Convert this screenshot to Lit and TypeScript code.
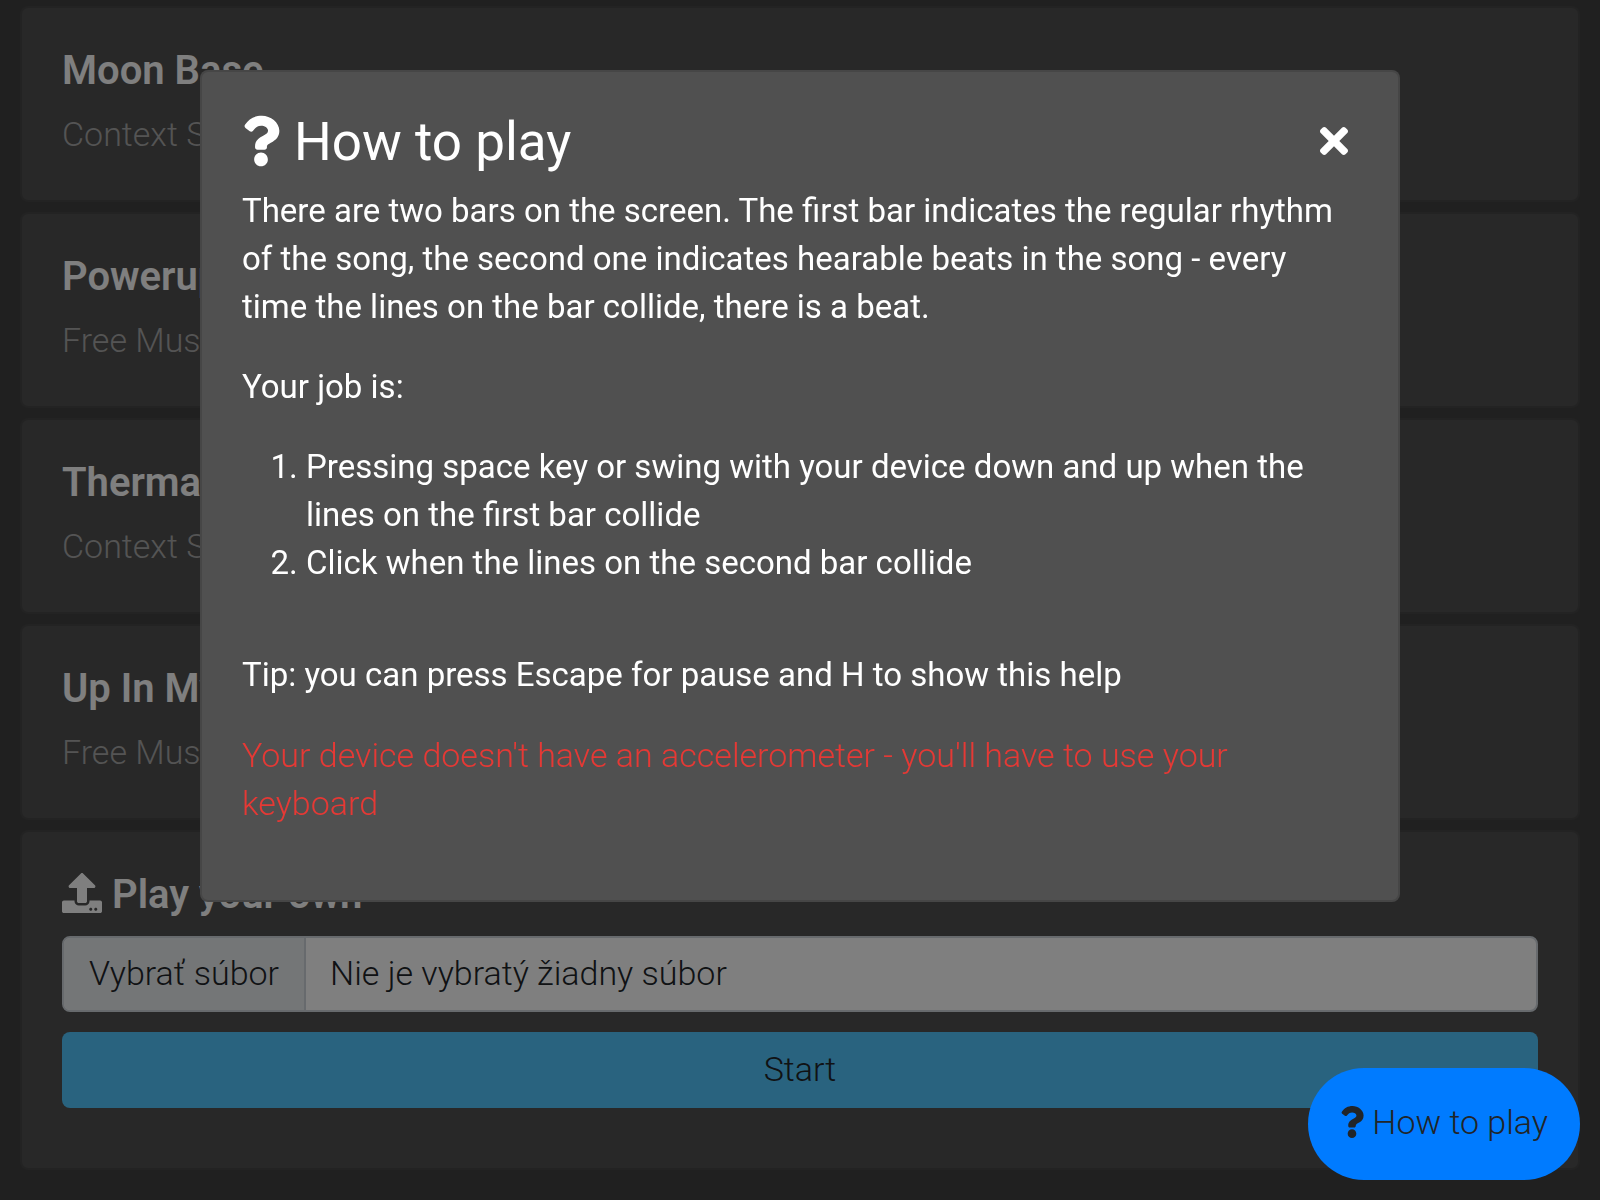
import { LitElement, html, css, svg, nothing } from "lit";
import { customElement, property, state } from "lit/decorators.js";

const ICONS: Record<string, { box: string; path: string }> = {
  question: {
    box: "0 0 384 512",
    path: "M202.021 0C122.202 0 70.503 32.703 29.914 91.026c-7.363 10.58-5.093 25.086 5.178 32.874l43.138 32.709c10.373 7.865 25.132 6.026 33.253-4.148 25.049-31.381 43.63-49.449 82.757-49.449 30.764 0 68.816 19.799 68.816 49.631 0 22.552-18.617 34.134-48.993 51.164-35.423 19.86-82.299 44.576-82.299 106.405V320c0 13.255 10.745 24 24 24h72.471c13.255 0 24-10.745 24-24v-5.773c0-42.86 125.268-44.645 125.268-160.627C377.504 66.256 286.902 0 202.021 0zM192 373.459c-38.196 0-69.271 31.075-69.271 69.271 0 38.195 31.075 69.27 69.271 69.27s69.271-31.075 69.271-69.271-31.075-69.27-69.271-69.27z",
  },
  close: {
    box: "0 80 352 352",
    path: "M242.72 256l100.07-100.07c12.28-12.28 12.28-32.19 0-44.48l-22.24-22.24c-12.28-12.28-32.19-12.28-44.48 0L176 189.28 75.93 89.21c-12.28-12.28-32.19-12.28-44.48 0L9.21 111.45c-12.28 12.28-12.28 32.19 0 44.48L109.28 256 9.21 356.07c-12.28 12.28-12.28 32.19 0 44.48l22.24 22.24c12.28 12.28 32.2 12.28 44.48 0L176 322.72l100.07 100.07c12.28 12.28 32.2 12.28 44.48 0l22.24-22.24c12.28-12.28 12.28-32.19 0-44.48L242.72 256z",
  },
  upload: {
    box: "0 0 512 512",
    path: "M296 384h-80c-13.3 0-24-10.7-24-24V192h-87.7c-17.8 0-26.7-21.5-14.1-34.1L242.3 5.7c7.5-7.5 19.8-7.5 27.3 0l152.2 152.2c12.6 12.6 3.7 34.1-14.1 34.1H320v168c0 13.3-10.7 24-24 24zm216-8v112c0 13.3-10.7 24-24 24H24c-13.3 0-24-10.7-24-24V376c0-13.3 10.7-24 24-24h136v8c0 30.9 25.1 56 56 56h80c30.9 0 56-25.1 56-56v-8h136c13.3 0 24 10.7 24 24zm-124 88c0-11-9-20-20-20s-20 9-20 20 9 20 20 20 20-9 20-20zm64 0c0-11-9-20-20-20s-20 9-20 20 9 20 20 20 20-9 20-20z",
  },
};

const icon = (name: string, cls: string) => html`
  <svg class=${cls} viewBox=${ICONS[name].box} aria-hidden="true">${svg`<path fill="currentColor" d=${ICONS[name].path}></path>`}</svg>
`;

const cardStyles = css`
  :host {
    display: block;
  }
  * {
    box-sizing: border-box;
  }
  .card {
    padding: 40px;
    border: 2px solid rgba(0, 0, 0, 0.125);
    border-radius: 8px;
    background: #505050;
  }
  .title {
    display: flex;
    align-items: center;
    gap: 10px;
    margin: 0 0 16px;
    color: #fff;
    font-size: 40px;
    font-weight: 600;
    line-height: 46px;
  }
`;

@customElement("song-card")
class SongCard extends LitElement {
  @property() name = "";
  @property() artist = "";

  static styles = [
    cardStyles,
    css`
      .artist {
        margin: 0 0 2px;
        color: #a8a8a8;
        font-size: 34px;
        line-height: 48px;
      }
    `,
  ];

  render() {
    return html`
      <article class="card">
        <h2 class="title">${this.name}</h2>
        <p class="artist">${this.artist}</p>
      </article>
    `;
  }
}

@customElement("upload-card")
class UploadCard extends LitElement {
  @state() private fileName = "";

  static styles = [
    cardStyles,
    css`
      .upload-icon {
        width: 40px;
        height: 40px;
        margin-bottom: 4px;
      }
      .title {
        margin-bottom: 18px;
      }
      .file {
        position: relative;
        display: flex;
        height: 76px;
        overflow: hidden;
        border: 2px solid #ced4da;
        border-radius: 8px;
        background: #fff;
        color: #212529;
        font-size: 34px;
        line-height: 70px;
        cursor: pointer;
      }
      .file-input {
        position: absolute;
        inset: 0;
        width: 100%;
        height: 100%;
        margin: 0;
        opacity: 0;
        cursor: pointer;
      }
      .file-button {
        padding: 0 25px;
        border-right: 2px solid #ced4da;
        background: #e9ecef;
        white-space: nowrap;
      }
      .file-name {
        flex: 1;
        padding: 0 24px;
      }
      .start {
        display: block;
        width: 100%;
        height: 76px;
        margin: 20px 0;
        padding: 0 0 2px;
        border: 0;
        border-radius: 8px;
        background: #52c6fe;
        color: #212529;
        font: inherit;
        font-size: 34px;
        cursor: pointer;
      }
    `,
  ];

  private pick(e: Event) {
    this.fileName = (e.target as HTMLInputElement).files?.[0]?.name ?? "";
  }

  render() {
    return html`
      <article class="card">
        <h2 class="title">${icon("upload", "upload-icon")}<span>Play your own</span></h2>
        <label class="file">
          <span class="file-button">Vybrať súbor</span>
          <span class="file-name">${this.fileName || "Nie je vybratý žiadny súbor"}</span>
          <input class="file-input" type="file" accept="audio/*" @change=${this.pick} />
        </label>
        <button class="start" type="button">Start</button>
      </article>
    `;
  }
}

@customElement("help-dialog")
class HelpDialog extends LitElement {
  static styles = css`
    * {
      box-sizing: border-box;
    }
    .backdrop {
      position: fixed;
      inset: 0;
      padding: 70px 12.5% 0;
      background: rgba(0, 0, 0, 0.5);
    }
    .dialog {
      padding: 40px;
      border: 2px solid rgba(0, 0, 0, 0.125);
      border-radius: 8px;
      background: #505050;
      color: #fff;
      font-size: 33px;
      font-weight: 400;
      line-height: 48px;
    }
    .head {
      display: flex;
      align-items: center;
      justify-content: space-between;
      margin-bottom: 14px;
    }
    .heading {
      display: flex;
      align-items: center;
      gap: 14px;
      margin: 0;
      font-size: 53px;
      font-weight: 400;
      line-height: 61px;
    }
    .heading-icon {
      width: 38px;
      height: 52px;
      margin-bottom: 4px;
    }
    .close {
      display: flex;
      padding: 8px 10px 12px;
      border: 0;
      background: none;
      color: inherit;
      cursor: pointer;
    }
    .close-icon {
      width: 28px;
      height: 28px;
    }
    .text {
      margin: 0 0 32px;
    }
    .steps {
      margin: 0 0 64px;
      padding-left: 64px;
    }
    .warning {
      margin: 0 0 33px;
      color: #e53935;
      font-size: 34px;
      font-weight: 300;
    }
  `;

  private close() {
    this.dispatchEvent(new CustomEvent("dismiss"));
  }

  render() {
    return html`
      <div class="backdrop">
        <section class="dialog" role="dialog" aria-modal="true" aria-labelledby="help-heading">
          <header class="head">
            <h1 class="heading" id="help-heading">${icon("question", "heading-icon")}<span>How to play</span></h1>
            <button class="close" type="button" aria-label="Close" @click=${this.close}>${icon("close", "close-icon")}</button>
          </header>
          <p class="text">
            There are two bars on the screen. The first bar indicates the regular rhythm of the song, the second one
            indicates hearable beats in the song - every time the lines on the bar collide, there is a beat.
          </p>
          <p class="text">Your job is:</p>
          <ol class="steps">
            <li>Pressing space key or swing with your device down and up when the lines on the first bar collide</li>
            <li>Click when the lines on the second bar collide</li>
          </ol>
          <p class="text">Tip: you can press Escape for pause and H to show this help</p>
          <p class="warning">Your device doesn't have an accelerometer - you'll have to use your keyboard</p>
        </section>
      </div>
    `;
  }
}

@customElement("app-root")
class AppRoot extends LitElement {
  @state() private helpOpen = true;

  private songs = [
    { name: "Moon Base", artist: "Context Sensitive" },
    { name: "Powerup!", artist: "Free Music" },
    { name: "Thermal", artist: "Context Sensitive" },
    { name: "Up In My", artist: "Free Music" },
  ];

  static styles = css`
    :host {
      display: block;
      min-height: 100vh;
      background: #404040;
      font-family: Roboto, "Liberation Sans", sans-serif;
      font-weight: 300;
    }
    * {
      box-sizing: border-box;
    }
    .list {
      display: flex;
      flex-direction: column;
      gap: 10px;
      padding: 6px 20px 30px;
    }
    .help {
      position: fixed;
      right: 20px;
      bottom: 20px;
      display: flex;
      align-items: center;
      gap: 8px;
      height: 112px;
      padding: 0 32px 4px;
      border: 0;
      border-radius: 56px;
      background: #007bff;
      color: #212529;
      font: inherit;
      font-size: 34px;
      cursor: pointer;
    }
    .help-icon {
      width: 24px;
      height: 32px;
    }
  `;

  render() {
    return html`
      <main class="list">
        ${this.songs.map((s) => html`<song-card .name=${s.name} .artist=${s.artist}></song-card>`)}
        <upload-card></upload-card>
      </main>
      ${this.helpOpen ? html`<help-dialog @dismiss=${() => (this.helpOpen = false)}></help-dialog>` : nothing}
      <button class="help" type="button" @click=${() => (this.helpOpen = true)}>
        ${icon("question", "help-icon")}<span>How to play</span>
      </button>
    `;
  }
}
